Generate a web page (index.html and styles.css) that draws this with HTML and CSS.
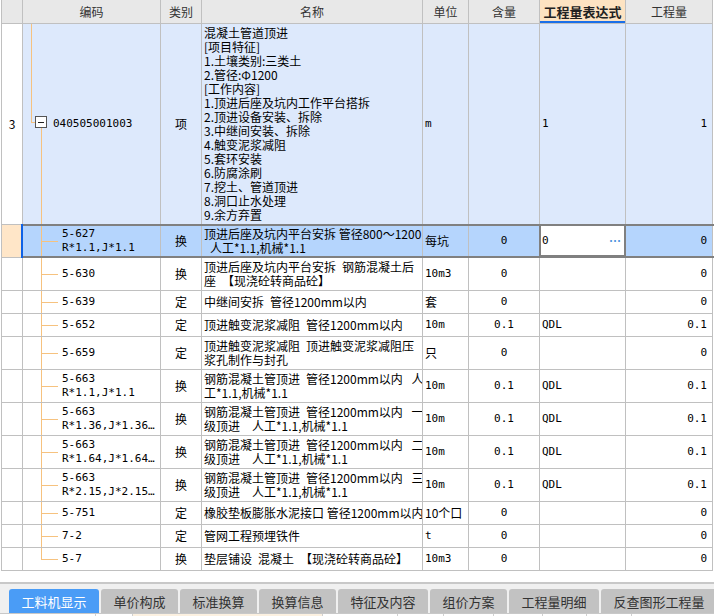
FILE: index.html
```html
<!DOCTYPE html>
<html lang="zh-CN">
<head>
<meta charset="utf-8">
<title>工料机显示</title>
<link rel="stylesheet" href="styles.css">
</head>
<body>
<div class="app">
  <div class="grid">
    <div class="row head">
      <div class="c"></div>
      <div class="c">编码</div>
      <div class="c">类别</div>
      <div class="c">名称</div>
      <div class="c">单位</div>
      <div class="c">含量</div>
      <div class="c hot">工程量表达式</div>
      <div class="c">工程量</div>
    </div>

    <div class="row main">
      <div class="c no">3</div>
      <div class="c code root"><span class="fold"></span><span class="n">040505001003</span></div>
      <div class="c type">项</div>
      <div class="c name top"><div>混凝土管道顶进<br>[项目特征]<br>1.土壤类别:三类土<br>2.管径:Φ1200<br>[工作内容]<br>1.顶进后座及坑内工作平台搭拆<br>2.顶进设备安装、拆除<br>3.中继间安装、拆除<br>4.触变泥浆减阻<br>5.套环安装<br>6.防腐涂刷<br>7.挖土、管道顶进<br>8.洞口止水处理<br>9.余方弃置</div></div>
      <div class="c n">m</div>
      <div class="c n mid"></div>
      <div class="c n">1</div>
      <div class="c n right">1</div>
    </div>

    <div class="row h2 sel">
      <div class="c no"></div>
      <div class="c code tree"><div class="n">5-627<br>R*1.1,J*1.1</div></div>
      <div class="c type">换</div>
      <div class="c name"><div>顶进后座及坑内平台安拆 管径800～1200<br>&ensp;人工*1.1,机械*1.1</div></div>
      <div class="c">每坑</div>
      <div class="c n mid">0</div>
      <div class="c n edit"><span>0</span><span class="dots">…</span></div>
      <div class="c n right">0</div>
    </div>

    <div class="row h2">
      <div class="c no"></div>
      <div class="c code tree"><div class="n">5-630</div></div>
      <div class="c type">换</div>
      <div class="c name"><div>顶进后座及坑内平台安拆&ensp;钢筋混凝土后<br>座&ensp;【现浇砼转商品砼】</div></div>
      <div class="c n">10m3</div>
      <div class="c n mid">0</div>
      <div class="c n"></div>
      <div class="c n right">0</div>
    </div>

    <div class="row h1">
      <div class="c no"></div>
      <div class="c code tree"><div class="n">5-639</div></div>
      <div class="c type">定</div>
      <div class="c name"><div>中继间安拆&ensp;管径1200mm以内</div></div>
      <div class="c">套</div>
      <div class="c n mid">0</div>
      <div class="c n"></div>
      <div class="c n right">0</div>
    </div>

    <div class="row h1">
      <div class="c no"></div>
      <div class="c code tree"><div class="n">5-652</div></div>
      <div class="c type">定</div>
      <div class="c name"><div>顶进触变泥浆减阻&ensp;管径1200mm以内</div></div>
      <div class="c n">10m</div>
      <div class="c n mid">0.1</div>
      <div class="c n">QDL</div>
      <div class="c n right">0.1</div>
    </div>

    <div class="row h2">
      <div class="c no"></div>
      <div class="c code tree"><div class="n">5-659</div></div>
      <div class="c type">定</div>
      <div class="c name"><div>顶进触变泥浆减阻&ensp;顶进触变泥浆减阻压<br>浆孔制作与封孔</div></div>
      <div class="c">只</div>
      <div class="c n mid">0</div>
      <div class="c n"></div>
      <div class="c n right">0</div>
    </div>

    <div class="row h2">
      <div class="c no"></div>
      <div class="c code tree"><div class="n">5-663<br>R*1.1,J*1.1</div></div>
      <div class="c type">换</div>
      <div class="c name"><div>钢筋混凝土管顶进&ensp;管径1200mm以内 &ensp;人<br>工*1.1,机械*1.1</div></div>
      <div class="c n">10m</div>
      <div class="c n mid">0.1</div>
      <div class="c n">QDL</div>
      <div class="c n right">0.1</div>
    </div>

    <div class="row h2">
      <div class="c no"></div>
      <div class="c code tree"><div class="n">5-663<br>R*1.36,J*1.36…</div></div>
      <div class="c type">换</div>
      <div class="c name"><div>钢筋混凝土管顶进&ensp;管径1200mm以内 &ensp;一<br>级顶进　人工*1.1,机械*1.1</div></div>
      <div class="c n">10m</div>
      <div class="c n mid">0.1</div>
      <div class="c n">QDL</div>
      <div class="c n right">0.1</div>
    </div>

    <div class="row h2">
      <div class="c no"></div>
      <div class="c code tree"><div class="n">5-663<br>R*1.64,J*1.64…</div></div>
      <div class="c type">换</div>
      <div class="c name"><div>钢筋混凝土管顶进&ensp;管径1200mm以内 &ensp;二<br>级顶进　人工*1.1,机械*1.1</div></div>
      <div class="c n">10m</div>
      <div class="c n mid">0.1</div>
      <div class="c n">QDL</div>
      <div class="c n right">0.1</div>
    </div>

    <div class="row h2">
      <div class="c no"></div>
      <div class="c code tree"><div class="n">5-663<br>R*2.15,J*2.15…</div></div>
      <div class="c type">换</div>
      <div class="c name"><div>钢筋混凝土管顶进&ensp;管径1200mm以内 &ensp;三<br>级顶进　人工*1.1,机械*1.1</div></div>
      <div class="c n">10m</div>
      <div class="c n mid">0.1</div>
      <div class="c n">QDL</div>
      <div class="c n right">0.1</div>
    </div>

    <div class="row h1">
      <div class="c no"></div>
      <div class="c code tree"><div class="n">5-751</div></div>
      <div class="c type">定</div>
      <div class="c name"><div>橡胶垫板膨胀水泥接口 管径1200mm以内</div></div>
      <div class="c">10个口</div>
      <div class="c n mid">0</div>
      <div class="c n"></div>
      <div class="c n right">0</div>
    </div>

    <div class="row h1">
      <div class="c no"></div>
      <div class="c code tree"><div class="n">7-2</div></div>
      <div class="c type">定</div>
      <div class="c name"><div>管网工程预埋铁件</div></div>
      <div class="c n">t</div>
      <div class="c n mid">0</div>
      <div class="c n"></div>
      <div class="c n right">0</div>
    </div>

    <div class="row h1">
      <div class="c no"></div>
      <div class="c code tree last"><div class="n">5-7</div></div>
      <div class="c type">换</div>
      <div class="c name"><div>垫层铺设&ensp;混凝土&ensp;【现浇砼转商品砼】</div></div>
      <div class="c n">10m3</div>
      <div class="c n mid">0</div>
      <div class="c n"></div>
      <div class="c n right">0</div>
    </div>
  </div>

  <div class="tabbar">
    <div class="tabs">
      <div class="tab active">工料机显示</div>
      <div class="tab">单价构成</div>
      <div class="tab">标准换算</div>
      <div class="tab">换算信息</div>
      <div class="tab">特征及内容</div>
      <div class="tab">组价方案</div>
      <div class="tab">工程量明细</div>
      <div class="tab">反查图形工程量</div>
    </div>
    <div class="strip">
      <div class="seg w96"></div>
      <div class="seg w37"></div>
      <div class="seg w190 beige"></div>
      <div class="seg w75"></div>
      <div class="seg w46"></div>
      <div class="seg w50"></div>
      <div class="seg w49"></div>
      <div class="seg w44"></div>
      <div class="seg w45"></div>
      <div class="seg fill"></div>
    </div>
  </div>
</div>
</body>
</html>
```

FILE: styles.css
```css
* { box-sizing: border-box; }

html, body {
  margin: 0;
  padding: 0;
  background: #ffffff;
}

body {
  width: 714px;
  height: 616px;
  overflow: hidden;
  font-family: "Noto Sans CJK SC", "Noto Sans", sans-serif;
  font-size: 12px;
  color: #000;
}

.app {
  display: flex;
  flex-direction: column;
  height: 616px;
}

.grid {
  flex: 1;
  margin-left: 1px;
}

.row {
  display: grid;
  grid-template-columns: 21px 138px 41px 221px 46px 71px 86px 87px;
  border-left: 1px solid #c0c0c0;
}

.row.head { height: 24px; }
.row.main { height: 201px; }
.row.h1 { height: 23px; }
.row.h2 { height: 33px; }

.c {
  display: flex;
  align-items: center;
  border-right: 1px solid #c0c0c0;
  border-bottom: 1px solid #c0c0c0;
  padding: 0 2px;
  line-height: 14px;
  white-space: nowrap;
  overflow: hidden;
  background-color: #ffffff;
}

.n {
  font-family: "DejaVu Sans Mono", monospace;
  font-size: 11px;
}

.head .c {
  background-color: #e8e8e8;
  justify-content: center;
  color: #333;
  font-size: 12px;
}

.head .c.hot {
  background-color: #fde3c2;
  font-weight: bold;
  font-size: 13px;
  color: #222;
  box-shadow: inset 0 -2px 0 #1a6fe8;
}

.no { justify-content: center; }
.type { justify-content: center; }
.mid { justify-content: center; }
.right { justify-content: flex-end; padding-right: 5px; }
.name { padding-left: 2px; }
.name.top { align-items: flex-start; padding-top: 2px; }

/* main item row */
.main .c { background-color: #dde9fc; }
.main .c.no { background-color: #ffffff; }

.code { padding-left: 39px; }

.code.root {
  padding-left: 12px;
  background-image:
    linear-gradient(#f6c27f, #f6c27f),
    linear-gradient(#f6c27f, #f6c27f),
    linear-gradient(#f6c27f, #f6c27f);
  background-repeat: no-repeat;
  background-position: 8px 0, 8px 98px, 18px 104px;
  background-size: 1px 98px, 5px 1px, 1px 100%;
}

.fold {
  width: 12px;
  height: 12px;
  border: 1px solid #555;
  background: #fff;
  margin-bottom: 4px;
  margin-right: 6px;
  display: flex;
  align-items: center;
  justify-content: center;
  flex: none;
}

.fold::before {
  content: "";
  width: 6px;
  height: 1px;
  background: #222;
}

.tree {
  background-image:
    linear-gradient(#f6c27f, #f6c27f),
    linear-gradient(#f6c27f, #f6c27f);
  background-repeat: no-repeat;
  background-position: 18px 0, 18px 50%;
  background-size: 1px 100%, 17px 1px;
}

.tree.last {
  background-size: 1px 50%, 17px 1px;
}

/* selected row */
.sel { position: relative; }
.sel .c { background-color: #b5d5fd; }
.sel .c.no { background-color: #ffe6c8; }

.sel::after {
  content: "";
  position: absolute;
  left: 20px;
  right: 0;
  top: -1px;
  bottom: 0;
  border-top: 2px solid #808080;
  border-bottom: 2px solid #808080;
  pointer-events: none;
}

.sel::before {
  content: "";
  position: absolute;
  left: 19px;
  width: 2px;
  top: -1px;
  bottom: 0;
  background: #0f62e6;
  z-index: 1;
}

.sel .c.edit {
  background-color: #ffffff;
  position: relative;
  overflow: visible;
  justify-content: space-between;
  padding-right: 4px;
}

.edit::after {
  content: "";
  position: absolute;
  left: -1px;
  right: -1px;
  top: -1px;
  bottom: 0;
  border: 2px solid #808080;
  pointer-events: none;
}

.dots {
  font-family: "Noto Sans CJK SC", sans-serif;
  font-size: 12px;
  color: #4a8fdc;
  font-weight: bold;
}

/* bottom tab bar */
.tabbar {
  height: 34px;
  border-top: 2px solid #c8c8c8;
  background: #f0f0f0;
  display: flex;
  flex-direction: column;
}

.tabs {
  display: flex;
  gap: 2px;
  padding: 5px 0 0 9px;
  height: 29px;
  overflow: hidden;
}

.tab {
  flex: none;
  height: 24px;
  padding: 0 12.5px;
  display: flex;
  align-items: center;
  background: #c2c2c2;
  color: #333;
  font-size: 13px;
  border-radius: 3px 3px 0 0;
  white-space: nowrap;
}

.tab.active {
  background: #4a9cf6;
  color: #ffffff;
}

.strip {
  height: 3px;
  display: flex;
  background: #ffffff;
  border-top: 1px solid #c8c8c8;
}

.seg {
  flex: none;
  border-right: 1px solid #d0d0d0;
}

.seg.beige { background: #fcf1e1; }
.w96 { width: 96px; }
.w37 { width: 37px; }
.w190 { width: 190px; }
.w75 { width: 75px; }
.w46 { width: 46px; }
.w50 { width: 50px; }
.w49 { width: 49px; }
.w44 { width: 44px; }
.w45 { width: 45px; }
.seg.fill { flex: 1; border-right: none; }
```
